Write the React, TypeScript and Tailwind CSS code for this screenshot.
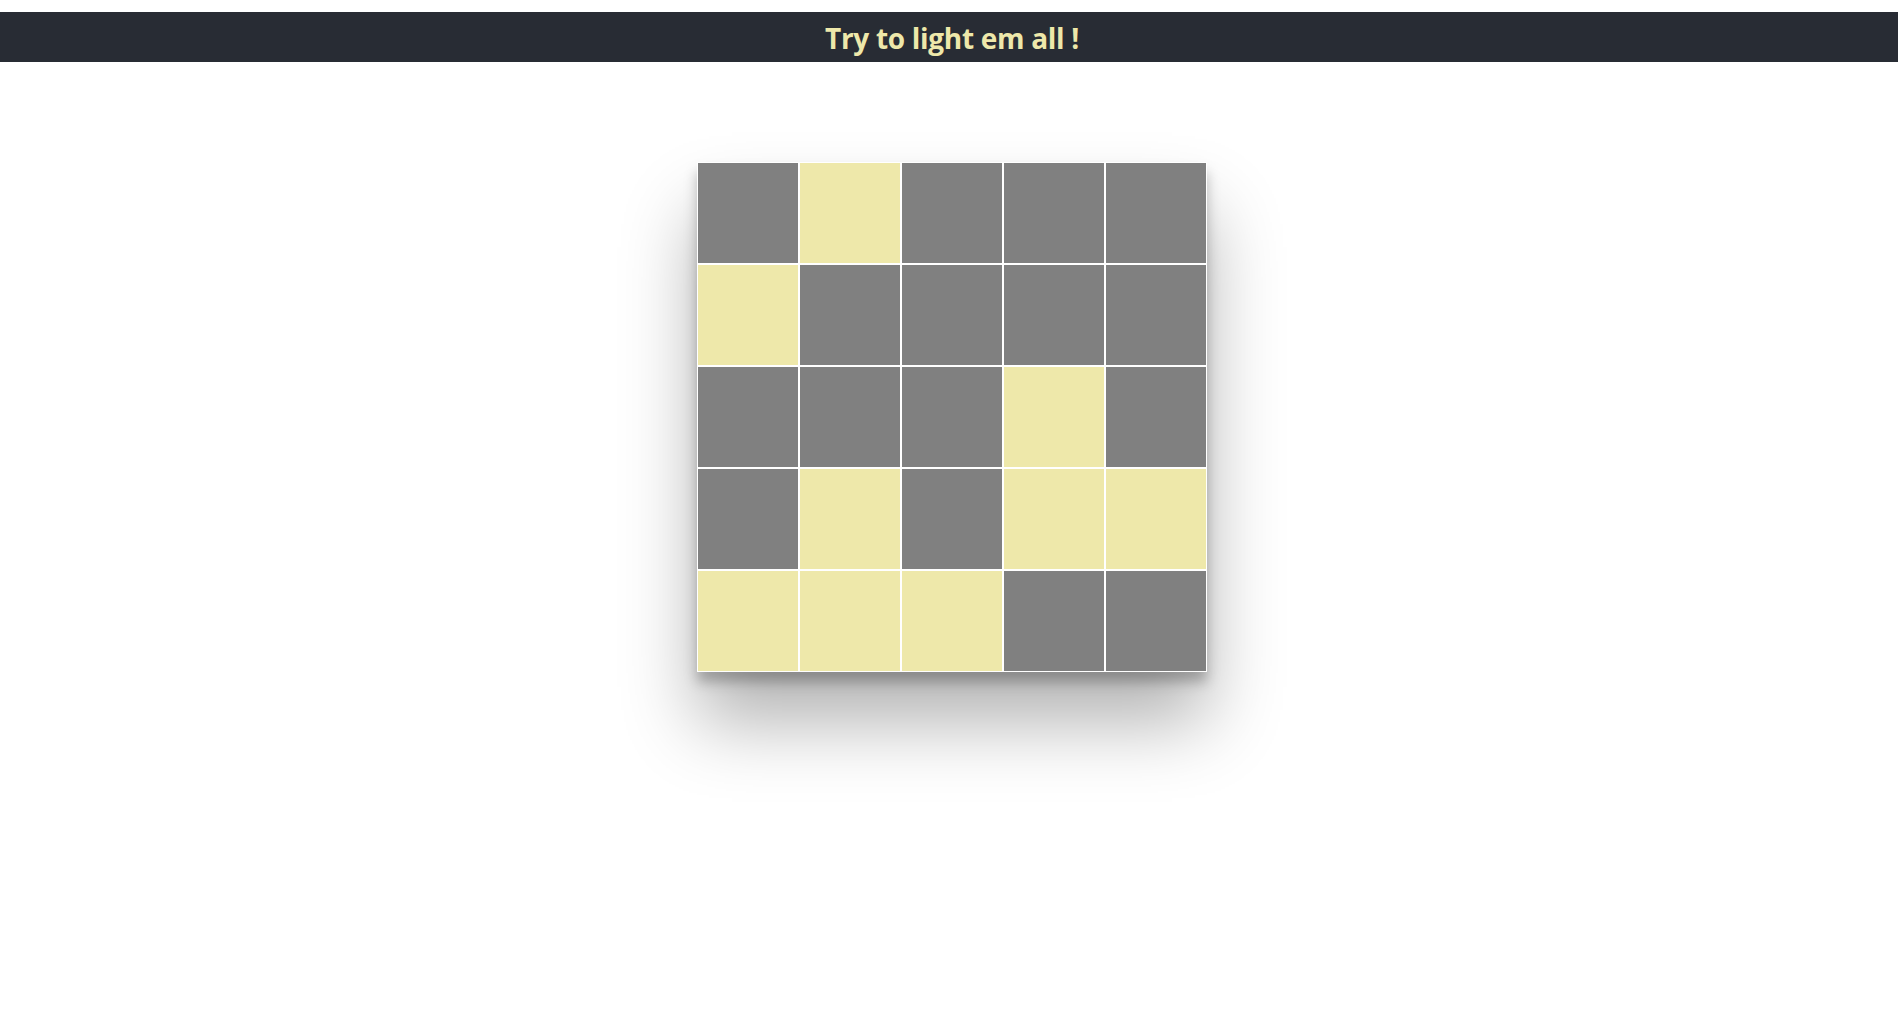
import { useState } from 'react';

// 1 = lit, 0 = off
const initialBoard = [
  [0, 1, 0, 0, 0],
  [1, 0, 0, 0, 0],
  [0, 0, 0, 1, 0],
  [0, 1, 0, 1, 1],
  [1, 1, 1, 0, 0],
];

const App = () => {
  const [board, setBoard] = useState(initialBoard);

  const flip = (r: number, c: number) => {
    const next = board.map((row) => [...row]);
    const cells = [
      [r, c],
      [r - 1, c],
      [r + 1, c],
      [r, c - 1],
      [r, c + 1],
    ];
    cells.forEach(([y, x]) => {
      if (y >= 0 && y < 5 && x >= 0 && x < 5) next[y][x] = next[y][x] ? 0 : 1;
    });
    setBoard(next);
  };

  return (
    <div className="min-h-screen bg-white font-['Open_Sans','Lato',sans-serif]">
      <header className="mt-3 h-[50px] bg-[#282c34] flex items-center justify-center pl-[6px]">
        <h1 className="text-[28px] font-bold text-[#eee8aa] leading-none tracking-[-0.3px] pt-[2px]">Try to light em all !</h1>
      </header>

      <div className="flex justify-center pl-[6px] pt-[100px]">
        <div className="flex flex-col shadow-[0_50px_70px_rgba(0,0,0,0.3),0_10px_12px_rgba(0,0,0,0.25)]">
          {board.map((row, r) => (
            <div key={r} className="flex">
              {row.map((lit, c) => (
                <button
                  key={c}
                  onClick={() => flip(r, c)}
                  className={
                    'w-[102px] h-[102px] border border-white ' +
                    (lit ? 'bg-[#eee8aa]' : 'bg-[#808080]')
                  }
                />
              ))}
            </div>
          ))}
        </div>
      </div>
    </div>
  );
};

export default App;
